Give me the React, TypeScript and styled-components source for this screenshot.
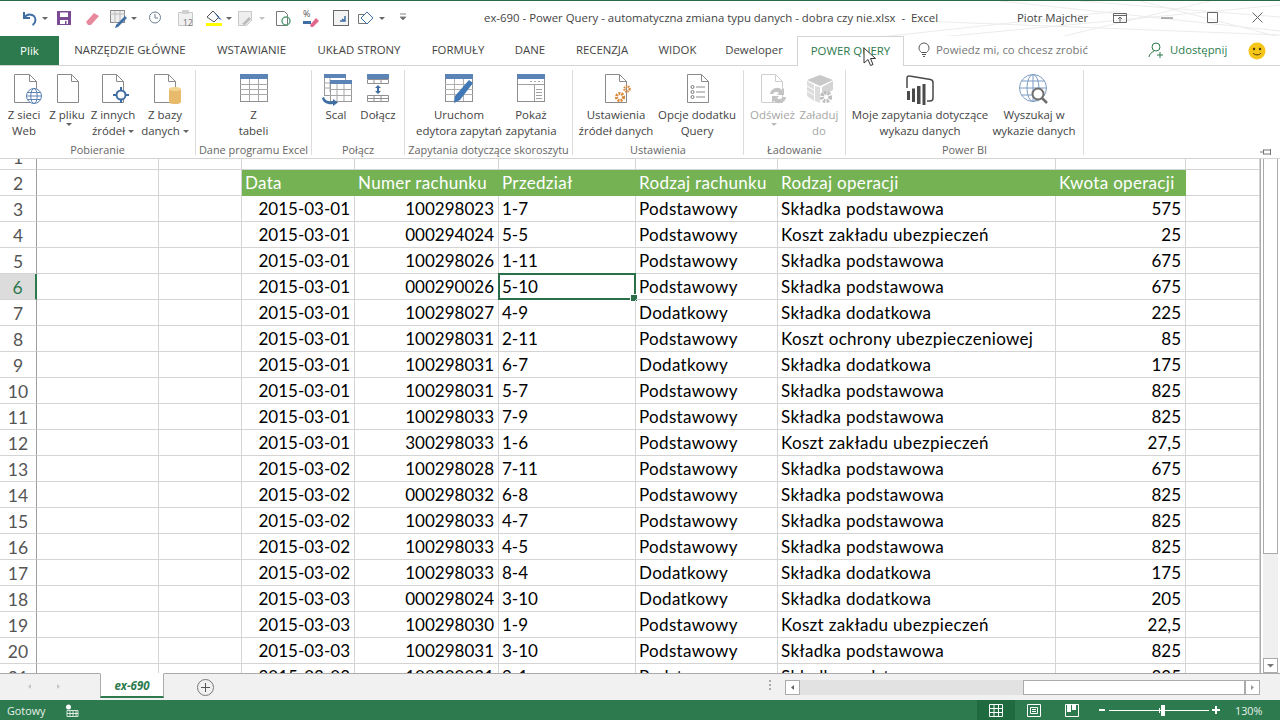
import React, { FC } from "react";
import styled, { createGlobalStyle } from "styled-components";

const GlobalStyle = createGlobalStyle`
  html, body {
    margin: 0;
    padding: 0;
    background: #fff;
    overflow: hidden;
  }
  * { box-sizing: border-box; }
`;

const UI_FONT = `"Open Sans", "Noto Sans", sans-serif`;
const CELL_FONT = `Lato, "Liberation Sans", sans-serif`;
const GREEN = "#2c7a4d";

const Page = styled.div`
  position: relative;
  width: 1280px;
  height: 720px;
  display: flex;
  flex-direction: column;
  overflow: hidden;
  font-family: ${UI_FONT};
  color: #444;
`;

/* title bar */
const TitleBar = styled.div`
  position: relative;
  height: 36px;
  flex: none;
  display: flex;
  align-items: center;
  padding-bottom: 2px;
  border-top: 1px solid #2a6b47;
  background: #fff;
`;
const Straws = styled.svg`
  position: absolute;
  right: 0;
  top: 0;
`;
const Quick = styled.div`
  width: 484px;
  flex: none;
  height: 100%;
`;
const Title = styled.div`
  width: 533px;
  flex: none;
  font-size: 11.4px;
  color: #444;
  white-space: pre;
  position: relative;
`;
const UserName = styled.div`
  width: 93px;
  flex: none;
  font-size: 11.4px;
  position: relative;
`;
const WinButton = styled.div<{ $w: number }>`
  width: ${(p) => p.$w}px;
  flex: none;
  display: flex;
  justify-content: center;
  align-items: center;
  position: relative;
`;

/* tab row */
const TabRow = styled.div`
  height: 30px;
  flex: none;
  display: flex;
  align-items: stretch;
  background: #fff;
  border-bottom: 1px solid #d4d4d4;
  position: relative;
`;
const FileTab = styled.div`
  width: 59px;
  background: ${GREEN};
  color: #fff;
  font-size: 11.5px;
  display: flex;
  align-items: center;
  justify-content: center;
`;
const Tab = styled.div<{ $w: number; $active?: boolean }>`
  width: ${(p) => p.$w}px;
  flex: none;
  display: flex;
  align-items: center;
  justify-content: center;
  padding-bottom: 2px;
  font-size: 11.4px;
  white-space: nowrap;
  color: ${(p) => (p.$active ? "#2c7a4d" : "#444")};
  ${(p) =>
    p.$active
      ? `background:#fff;border:1px solid #d4d4d4;border-bottom:0;height:30px;margin-right:-1px;`
      : ""}
`;
const TellMe = styled.div`
  margin-left: 15px;
  width: 230px;
  display: flex;
  align-items: center;
  gap: 6px;
  padding-bottom: 2px;
  font-size: 11.4px;
  color: #777;
  white-space: nowrap;
`;
const Share = styled.div`
  width: 100px;
  display: flex;
  align-items: center;
  gap: 6px;
  padding-bottom: 2px;
  font-size: 11.3px;
  color: ${GREEN};
`;

/* ribbon */
const Ribbon = styled.div`
  height: 93px;
  flex: none;
  display: flex;
  padding: 4px 0 3px;
  background: #fff;
  border-bottom: 1px solid #d4d4d4;
`;
const Group = styled.div<{ $w: number }>`
  width: ${(p) => p.$w}px;
  flex: none;
  display: flex;
  flex-direction: column;
  border-right: 1px solid #dcdcdc;
`;
const GroupBody = styled.div<{ $pad?: number; $center?: boolean }>`
  flex: 1;
  display: flex;
  padding-top: 2px;
  padding-left: ${(p) => p.$pad ?? 0}px;
  justify-content: ${(p) => (p.$center ? "center" : "flex-start")};
`;
const GroupLabel = styled.div`
  height: 16px;
  padding-top: 4px;
  line-height: 14px;
  text-align: center;
  font-size: 10.9px;
  color: #666;
  white-space: nowrap;
`;
const RibbonBtn = styled.div<{ $w: number; $off?: boolean }>`
  width: ${(p) => p.$w}px;
  flex: none;
  display: flex;
  flex-direction: column;
  align-items: center;
  text-align: center;
  color: ${(p) => (p.$off ? "#a6a6a6" : "#444")};
  font-size: 11.45px;
  line-height: 16px;
  white-space: nowrap;
  svg { flex: none; margin-bottom: 1px; }
`;
const Caret = styled.span<{ $off?: boolean }>`
  display: inline-block;
  width: 0;
  height: 0;
  margin-left: 3px;
  vertical-align: 2px;
  border-left: 3px solid transparent;
  border-right: 3px solid transparent;
  border-top: 3px solid ${(p) => (p.$off ? "#bbb" : "#666")};
`;
const Pin = styled.svg`
  margin-left: auto;
  margin-right: 8px;
  align-self: flex-end;
  margin-bottom: -1px;
`;

/* sheet */
const SheetArea = styled.div`
  height: 514px;
  flex: none;
  display: flex;
  background: #fff;
`;
const Grid = styled.div`
  width: 1261px;
  flex: none;
  overflow: hidden;
  border-right: 1px solid #ababab;
`;
const Row = styled.div<{ $h: number }>`
  display: flex;
  height: ${(p) => p.$h}px;
`;
const RowHead = styled.div<{ $sel?: boolean }>`
  width: 37px;
  flex: none;
  border-bottom: 1px solid #d4d4d4;
  border-right: ${(p) => (p.$sel ? `2px solid ${GREEN}` : "1px solid #9f9f9f")};
  background: ${(p) => (p.$sel ? "#dcdcdc" : "#fff")};
  color: ${(p) => (p.$sel ? GREEN : "#555")};
  font-family: ${CELL_FONT};
  font-size: 17.5px;
  display: flex;
  align-items: flex-end;
  justify-content: center;
  line-height: 23px;
  overflow: hidden;
`;
const Cell = styled.div<{ $w: number; $right?: boolean; $head?: boolean; $tight?: boolean }>`
  width: ${(p) => p.$w}px;
  flex: none;
  position: relative;
  line-height: 26px;
  padding: ${(p) => (p.$right ? "0 4px 0 0" : "0 0 0 3px")};
  text-align: ${(p) => (p.$right ? "right" : "left")};
  font-family: ${CELL_FONT};
  font-size: 17px;
  letter-spacing: ${(p) => (p.$tight ? "0" : "0.32px")};
  white-space: nowrap;
  color: ${(p) => (p.$head ? "#fff" : "#000")};
  background: ${(p) => (p.$head ? "#75b254" : "transparent")};
  border-right: 1px solid ${(p) => (p.$head ? "#75b254" : "#d4d4d4")};
  border-bottom: 1px solid ${(p) => (p.$head ? "#75b254" : "#d4d4d4")};
`;
const ActiveFrame = styled.div`
  position: absolute;
  left: -1px;
  top: -1px;
  right: -1px;
  bottom: -1px;
  border: 2px solid #2a6f48;
  pointer-events: none;
  &::after {
    content: "";
    position: absolute;
    right: -4px;
    bottom: -4px;
    width: 6px;
    height: 6px;
    background: #2a6f48;
    border: 1px solid #fff;
  }
`;
const VScroll = styled.div`
  width: 19px;
  flex: none;
  display: flex;
  flex-direction: column;
  padding: 0 2px;
  background: #fff;
`;
const VTrack = styled.div`
  flex: 1;
  background: #f0f0f0;
`;
const VThumb = styled.div`
  height: 395px;
  background: #fff;
  border: 1px solid #ababab;
  border-top: 0;
`;
const VButton = styled.div`
  height: 15px;
  background: #fff;
  border: 1px solid #ababab;
  display: flex;
  align-items: center;
  justify-content: center;
`;

/* sheet tabs + horizontal scrollbar */
const TabBar = styled.div`
  height: 27px;
  flex: none;
  display: flex;
  align-items: flex-start;
  background: #f1f1f1;
  border-top: 1px solid #ababab;
`;
const NavArrows = styled.div`
  width: 100px;
  height: 24px;
  flex: none;
  display: flex;
  align-items: center;
  padding-left: 26px;
  gap: 22px;
`;
const SheetTab = styled.div`
  width: 64px;
  height: 25px;
  margin-top: -1px;
  flex: none;
  background: #fff;
  border: 1px solid #ababab;
  border-top-color: #fff;
  border-bottom: 2px solid ${GREEN};
  color: ${GREEN};
  font-size: 11.5px;
  font-weight: 700;
  font-style: italic;
  text-align: center;
  line-height: 24px;
`;
const AddSheet = styled.div`
  width: 17px;
  height: 17px;
  margin: 5px 0 0 33px;
  flex: none;
  border: 1px solid #777;
  border-radius: 50%;
  position: relative;
  &::before, &::after {
    content: "";
    position: absolute;
    background: #555;
  }
  &::before { left: 3px; right: 3px; top: 7px; height: 1px; }
  &::after { top: 3px; bottom: 3px; left: 7px; width: 1px; }
`;
const Dots = styled.div`
  margin: 6px 0 0 555px;
  width: 2px;
  height: 11px;
  flex: none;
  background: repeating-linear-gradient(#aaa 0 2px, transparent 2px 4px);
`;
const HScroll = styled.div`
  margin: 6px 0 0 14px;
  width: 475px;
  height: 15px;
  flex: none;
  display: flex;
`;
const HTrack = styled.div`
  flex: 1;
  display: flex;
  background: #e2e2e2;
`;
const HThumb = styled.div`
  margin-left: auto;
  width: 222px;
  background: #fff;
  border: 1px solid #ababab;
`;
const HButton = styled.div`
  width: 15px;
  background: #fff;
  border: 1px solid #ababab;
  display: flex;
  align-items: center;
  justify-content: center;
`;

/* status bar */
const StatusBar = styled.div`
  height: 20px;
  flex: none;
  display: flex;
  align-items: center;
  background: ${GREEN};
  color: #e8f1ec;
  font-size: 10.8px;
  padding-left: 7px;
`;
const StatusText = styled.div`
  width: 58px;
  flex: none;
`;
const StatusGap = styled.div`
  width: 898px;
  flex: none;
`;
const ViewBtn = styled.div<{ $active?: boolean }>`
  width: 38px;
  height: 20px;
  flex: none;
  display: flex;
  align-items: center;
  justify-content: center;
  background: ${(p) => (p.$active ? "#1f6a3f" : "transparent")};
`;
const Zoom = styled.div`
  display: flex;
  align-items: center;
  flex: none;
  margin-left: 8px;
  height: 20px;
`;
const ZoomTrack = styled.div`
  position: relative;
  width: 100px;
  height: 1px;
  margin: 0 3px 0 4px;
  background: #fff;
`;
const ZoomThumb = styled.div`
  position: absolute;
  left: 52px;
  top: -5px;
  width: 4px;
  height: 11px;
  background: #fff;
`;
const ZoomMark = styled.div`
  position: absolute;
  left: 50px;
  top: -2px;
  width: 1px;
  height: 5px;
  background: #fff;
`;
const ZoomValue = styled.div`
  margin-left: 15px;
  width: 30px;
`;
const Pointer = styled.svg`
  position: absolute;
  left: 863px;
  top: 47px;
`;

/* icons */
const Doc: FC<{ x?: number; w?: number; c?: string }> = ({ x = 7, w = 21, c = "#8a8a8a" }) => (
  <path
    d={`M${x + 0.5} 2.5h${w - 7}l7 7v21h-${w}zM${x + w - 6.5} 2.5v7h7`}
    fill="#fff"
    stroke={c}
  />
);

const Ic: FC<{ children?: React.ReactNode; w?: number }> = ({ children, w = 36 }) => (
  <svg width={w} height={34} viewBox={`0 0 ${w} 34`}>
    {children}
  </svg>
);

const TableIcon = () => (
  <Ic>
    <rect x="4.5" y="3.5" width="27" height="26" fill="#fff" stroke="#8f8f8f" />
    <rect x="4" y="2" width="28" height="5" fill="#5b83b5" />
    <path d="M4 12.5h28M4 17.5h28M4 22.5h28M13.5 7v22M22.5 7v22" stroke="#a8a8a8" />
  </Ic>
);

const MergeIcon = () => (
  <Ic>
    <rect x="6.5" y="3.5" width="21" height="20" fill="#fff" stroke="#9a9a9a" />
    <rect x="6" y="2" width="22" height="4" fill="#5b83b5" />
    <path d="M6 11h8M6 16h8M12 6v14" stroke="#a8a8a8" />
    <rect x="12.5" y="9.5" width="21" height="20" fill="#fff" stroke="#9a9a9a" />
    <rect x="12" y="8" width="22" height="4" fill="#5b83b5" />
    <path d="M12 17.5h22M12 23.5h22M19 12v17M26 12v17" stroke="#a8a8a8" />
    <path d="M6 25c1 4 5 5 9 4v-2l5 3.5-5 3.5v-2c-5 1-10-1-11-6z" fill="#3f6ea3" />
  </Ic>
);

const AppendIcon = () => (
  <Ic>
    <rect x="7" y="2" width="22" height="5" fill="#5b83b5" />
    <path d="M7.5 7.5h21v4h-21zM14 7v5M21 7v5" fill="#fff" stroke="#8f8f8f" />
    <path d="M7.5 23.5h21v6h-21zM7 26.5h22M14 23v7M21 23v7" fill="#fff" stroke="#8f8f8f" />
    <path d="M18 13l3 3h-2v3h2l-3 3-3-3h2v-3h-2z" fill="#3f6ea3" />
  </Ic>
);

const EditorIcon = () => (
  <Ic>
    <rect x="4.5" y="3.5" width="27" height="26" fill="#fff" stroke="#8f8f8f" />
    <rect x="4" y="2" width="28" height="5" fill="#5b83b5" />
    <path d="M4 12.5h28M4 17.5h28M4 22.5h28M13.5 7v22M22.500 7v22" stroke="#b0b0b0" />
    <path d="M28 8l4 3-13 17-6 3 1-7z" fill="#3f78b5" />
  </Ic>
);

const ShowIcon = () => (
  <Ic>
    <rect x="4.5" y="3.5" width="27" height="26" fill="#fff" stroke="#8f8f8f" />
    <rect x="4" y="2" width="28" height="5" fill="#5b83b5" />
    <path d="M5 12.5h26M21.500 13v16M23 17.500h6M23 20.500h6M23 23.500h6M23 26.500h6" stroke="#a0a0a0" />
    <path d="M17 9.500h13" stroke="#aaa" strokeDasharray="2 2" />
  </Ic>
);

const Gear: FC<{ cx: number; cy: number; r: number; c?: string }> = ({ cx, cy, r, c = "#d98a3d" }) => (
  <circle cx={cx} cy={cy} r={r} fill="none" stroke={c} strokeWidth={r * 0.9} strokeDasharray={`${r * 0.55} ${r * 0.28}`} />
);

const WIcon = () => (
  <Ic>
    <Doc x={7} w={21} />
    <Gear cx={22} cy={25} r={3.5} />
    <Gear cx={29} cy={17} r={2.6} />
  </Ic>
);

const OptionsIcon = () => (
  <Ic>
    <Doc x={8} w={21} />
    <path d="M17 15h9M17 20h9M17 25h9" stroke="#8a8a8a" />
    <circle cx="13.500" cy="15" r="1.500" fill="none" stroke="#777" />
    <circle cx="13.500" cy="20" r="1.500" fill="none" stroke="#777" />
    <circle cx="13.500" cy="25" r="1.500" fill="none" stroke="#777" />
  </Ic>
);

const RefreshIcon = () => (
  <Ic>
    <Doc x={6} w={21} c="#cfcfcf" />
    <path d="M15 22a7 7 0 0 1 12-4l2-2v7h-7l2-2a4 4 0 0 0-6 1zM31 25a7 7 0 0 1-12 4l-2 2v-7h7l-2 2a4 4 0 0 0 6-1z" fill="#c4c4c4" />
  </Ic>
);

const LoadIcon = () => (
  <Ic>
    <path d="M6 8l13-5 13 5-13 6z" fill="#c9c9c9" />
    <path d="M6 9v15l7 5V13zM14 14v15l5 2V15z" fill="#dcdcdc" />
    <path d="M6 14l7 4M6 19l7 4" stroke="#fff" />
    <path d="M21 15l11-6v9l-11 6z" fill="#d4d4d4" />
    <Gear cx={25} cy={25} r={4.2} c="#bdbdbd" />
  </Ic>
);

const PowerBiIcon = () => (
  <Ic>
    <path d="M5 16V6c0-1.500 1-2.300 2.500-2l21 3.500c1.500.3 2.500 1.300 2.500 3V26c0 2-1 3-3 3h-3" fill="none" stroke="#4a4a4a" strokeWidth="1.500" />
    <path d="M5 19h3v9H5zM10 16.500h3V30h-3zM15 14h3.500v18H15zM20.500 12h3v21h-3z" fill="#4a4a4a" />
  </Ic>
);

const GlobeSearchIcon = () => (
  <Ic>
    <g fill="none" stroke="#7b9cc4">
      <circle cx="17" cy="16" r="13.500" />
      <ellipse cx="17" cy="16" rx="6" ry="13.500" />
      <path d="M17 2.500v27M3.500 16h27M5.500 9h23M5.500 23h23" />
    </g>
    <circle cx="22" cy="22" r="5.500" fill="#fff" stroke="#6e6e6e" strokeWidth="2" />
    <path d="M26 26l5 5" stroke="#6e6e6e" strokeWidth="2.500" />
  </Ic>
);

const WebIcon = () => (
  <Ic>
    <Doc x={8} w={22} />
    <g fill="#fff" stroke="#5b83b5">
      <circle cx="28" cy="24" r="7.500" />
      <ellipse cx="28" cy="24" rx="3.200" ry="7.500" fill="none" />
      <path d="M20.500 24h15M21.500 20.500h13M21.500 27.500h13" fill="none" />
    </g>
  </Ic>
);

const OtherIcon = () => (
  <Ic>
    <Doc x={7} w={21} />
    <path d="M26 15v16M18 23h16" stroke="#3f6ea3" strokeWidth="2" />
    <circle cx="26" cy="23" r="4.500" fill="#fff" stroke="#3f6ea3" strokeWidth="2" />
  </Ic>
);

const DbIcon = () => (
  <Ic>
    <Doc x={7} w={21} />
    <rect x="22" y="17" width="12" height="13" rx="1" fill="#e8bb6c" />
    <ellipse cx="28" cy="17" rx="6" ry="2" fill="#f3d491" />
    <ellipse cx="28" cy="30" rx="6" ry="2" fill="#e8bb6c" />
  </Ic>
);

const QuickIcons = () => (
  <svg width="420" height="33" viewBox="0 1 420 33">
    <g fill="none">
      <path d="M24 12v6h6M24 18c2-3 5-4 8-3 3 1 4 4 3 7-.5 1.500-1.500 2.500-2.500 3" stroke="#3f6ea3" strokeWidth="2" />
      <path d="M42 17h6l-3 3z" fill="#666" />
      <rect x="57" y="11" width="14" height="14" fill="#7a4a95" />
      <rect x="60" y="12.500" width="8" height="4.500" fill="#fff" />
      <rect x="60" y="20" width="8" height="4" fill="#fff" />
      <rect x="65" y="21" width="1.500" height="3" fill="#7a4a95" />
      <path d="M86 22l8-9 5 3-8 9-3 0z" fill="#e88a9e" />
      <rect x="110.500" y="10.500" width="14" height="12" stroke="#8a8a8a" fill="#eee" />
      <path d="M110 14h15M115 11v12M120 11v12" stroke="#bbb" />
      <path d="M116 25l9-9 2 2-9 9-3 1z" fill="#3f6ea3" />
      <path d="M131 17h6l-3 3z" fill="#666" />
      <circle cx="155" cy="17.500" r="5.500" stroke="#6d7f93" />
      <path d="M155 14v4h3" stroke="#6d7f93" />
      <path d="M178.500 12.500h14v13h-14z" stroke="#c8c8c8" fill="#f1f1f1" />
      <rect x="182" y="10" width="7" height="4" fill="#d0d0d0" />
      <text x="193" y="26" textAnchor="end" fontSize="9" fontFamily={UI_FONT} fill="#777">12</text>
      <path d="M207 17l6-6 6 6-5 5z" stroke="#555" fill="#fff" />
      <path d="M213 11l6 6 3 3-3-1" fill="#3f6ea3" />
      <rect x="206" y="23" width="16" height="3" fill="#ffff00" />
      <path d="M226 17h6l-3 3z" fill="#666" />
      <path d="M238.500 11.500h13v9l-5 5h-8z" stroke="#c8c8c8" fill="#eee" />
      <path d="M242 24l7-7 2 2-6 6z" fill="#bbb" />
      <path d="M259 17h6l-3 3z" fill="#c0c0c0" />
      <path d="M276.500 11.500h8l3 3v11h-11z" stroke="#777" fill="#fff" />
      <circle cx="286" cy="21" r="4" stroke="#59a07a" strokeWidth="1.500" />
      <text x="303" y="17" fontSize="9" fontFamily={UI_FONT} fill="#555">%</text>
      <path d="M303 21h8v3h-8z" fill="#3f6ea3" />
      <path d="M310 25l6-7 3 3-6 6h-2z" fill="#e0688a" />
      <rect x="333.500" y="10.500" width="15" height="15" stroke="#666" fill="#f3f3f3" />
      <path d="M340 21h5v-5M345 21l-3-2" stroke="#3f6ea3" strokeWidth="1.500" />
      <path d="M358.500 14.500h8v9h-8z" stroke="#777" />
      <path d="M367 12l6 6-6 6-6-6z" stroke="#3f6ea3" fill="#fff" />
      <path d="M379 17h6l-3 3z" fill="#666" />
      <path d="M400 14h6M400 17h6l-3 3z" stroke="#888" fill="#666" />
    </g>
  </svg>
);

const BulbIcon = () => (
  <svg width="12" height="15" viewBox="0 0 12 15" fill="none" stroke="#555">
    <path d="M3.500 10.500C2 9 1 8 1 6a5 5 0 0 1 10 0c0 2-1 3-2.500 4.500zM4 12.500h4M5 14.500h2" />
  </svg>
);

const ShareIcon = () => (
  <svg width="16" height="16" viewBox="0 0 16 16" fill="none" stroke="#2c7a4d">
    <circle cx="8" cy="5" r="4" />
    <path d="M1 15c.5-3 2.500-5 5-5.500M9 13h6M12 10v6" />
  </svg>
);

const Smiley = () => (
  <svg width="18" height="18" viewBox="0 0 18 18">
    <circle cx="9" cy="9" r="8.500" fill="#f5c518" />
    <circle cx="6" cy="7" r="1.200" fill="#4a3a10" />
    <circle cx="12" cy="7" r="1.200" fill="#4a3a10" />
    <path d="M5 11c1.500 2.500 6.500 2.500 8 0" fill="none" stroke="#4a3a10" />
  </svg>
);

const Triangle: FC<{ dir: "l" | "r" | "d"; c?: string }> = ({ dir, c = "#777" }) => (
  <svg width="7" height="7" viewBox="0 0 7 7" fill={c}>
    {dir === "l" && <path d="M5 1v5L2 3.500z" />}
    {dir === "r" && <path d="M2 1v5l3-2.500z" />}
    {dir === "d" && <path d="M0 2h7L3.500 5.500z" />}
  </svg>
);

/* data */
const COLS = [122, 83, 113, 144, 137, 142, 278, 130, 74];

type Rec = [string, string, string, string, string, string];

const HEAD: Rec = ["Data", "Numer rachunku", "Przedział", "Rodzaj rachunku", "Rodzaj operacji", "Kwota operacji"];

const SP = "Składka podstawowa";
const SD = "Składka dodatkowa";
const KZ = "Koszt zakładu ubezpieczeń";
const PO = "Podstawowy";
const DO = "Dodatkowy";

const DATA: Rec[] = [
  ["2015-03-01", "100298023", "1-7", PO, SP, "575"],
  ["2015-03-01", "000294024", "5-5", PO, KZ, "25"],
  ["2015-03-01", "100298026", "1-11", PO, SP, "675"],
  ["2015-03-01", "000290026", "5-10", PO, SP, "675"],
  ["2015-03-01", "100298027", "4-9", DO, SD, "225"],
  ["2015-03-01", "100298031", "2-11", PO, "Koszt ochrony ubezpieczeniowej", "85"],
  ["2015-03-01", "100298031", "6-7", DO, SD, "175"],
  ["2015-03-01", "100298031", "5-7", PO, SP, "825"],
  ["2015-03-01", "100298033", "7-9", PO, SP, "825"],
  ["2015-03-01", "300298033", "1-6", PO, KZ, "27,5"],
  ["2015-03-02", "100298028", "7-11", PO, SP, "675"],
  ["2015-03-02", "000298032", "6-8", PO, SP, "825"],
  ["2015-03-02", "100298033", "4-7", PO, SP, "825"],
  ["2015-03-02", "100298033", "4-5", PO, SP, "825"],
  ["2015-03-02", "100298033", "8-4", DO, SD, "175"],
  ["2015-03-03", "000298024", "3-10", DO, SD, "205"],
  ["2015-03-03", "100298030", "1-9", PO, KZ, "22,5"],
  ["2015-03-03", "100298031", "3-10", PO, SP, "825"],
  ["2015-03-03", "100300031", "9-1", PO, SP, "825"],
];

const TABS: [string, number][] = [
  ["NARZĘDZIE GŁÓWNE", 142],
  ["WSTAWIANIE", 101],
  ["UKŁAD STRONY", 114],
  ["FORMUŁY", 84],
  ["DANE", 60],
  ["RECENZJA", 84],
  ["WIDOK", 67],
  ["Deweloper", 86],
];

const ACTIVE_ROW = 6;

const App: FC = () => {
  return (
    <Page>
      <GlobalStyle />
      <TitleBar>
        <Straws width="400" height="36" viewBox="0 0 400 36" fill="none" stroke="#ececec">
          <path d="M0 36L240 10M60 36L400 4M120 0L400 30M200 0L400 16M40 20L400 34M260 0L400 36M330 0L180 36" />
        </Straws>
        <Quick>
          <QuickIcons />
        </Quick>
        <Title>ex-690 - Power Query - automatyczna zmiana typu danych - dobra czy nie.xlsx  -  Excel</Title>
        <UserName>Piotr Majcher</UserName>
        <WinButton $w={20}>
          <svg width="14" height="10" viewBox="0 0 14 10" fill="none" stroke="#666">
            <path d="M.5.500h13v9H.5zM.5 2.500h13M7 9V4M5 6l2-2 2 2" />
          </svg>
        </WinButton>
        <WinButton $w={74}>
          <svg width="12" height="2" viewBox="0 0 12 2">
            <path d="M0 1h12" stroke="#666" />
          </svg>
        </WinButton>
        <WinButton $w={16}>
          <svg width="11" height="11" viewBox="0 0 11 11" fill="none" stroke="#666">
            <path d="M.5.500h10v10H.5z" />
          </svg>
        </WinButton>
        <WinButton $w={74}>
          <svg width="11" height="11" viewBox="0 0 11 11" fill="none" stroke="#666">
            <path d="M.5.500l10 10M10.500.500l-10 10" />
          </svg>
        </WinButton>
      </TitleBar>

      <TabRow>
        <FileTab>Plik</FileTab>
        {TABS.map(([label, w]) => (
          <Tab key={label} $w={w}>
            {label}
          </Tab>
        ))}
        <Tab $w={107} $active>
          POWER QUERY
        </Tab>
        <TellMe>
          <BulbIcon />
          Powiedz mi, co chcesz zrobić
        </TellMe>
        <Share>
          <ShareIcon />
          Udostępnij
        </Share>
        <WinButton $w={18}>
          <Smiley />
        </WinButton>
      </TabRow>

      <Ribbon>
        <Group $w={196}>
          <GroupBody>
            <RibbonBtn $w={48}>
              <WebIcon />
              Z sieci
              <br />
              Web
            </RibbonBtn>
            <RibbonBtn $w={38}>
              <Ic>
                <Doc x={8} w={21} />
              </Ic>
              Z pliku
              <br />
              <Caret />
            </RibbonBtn>
            <RibbonBtn $w={54}>
              <OtherIcon />
              Z innych
              <br />
              <span>
                źródeł
                <Caret />
              </span>
            </RibbonBtn>
            <RibbonBtn $w={50}>
              <DbIcon />Z bazy
              <br />
              <span>
                danych
                <Caret />
              </span>
            </RibbonBtn>
          </GroupBody>
          <GroupLabel>Pobieranie</GroupLabel>
        </Group>

        <Group $w={116}>
          <GroupBody $center>
            <RibbonBtn $w={60}>
              <TableIcon />Z
              <br />
              tabeli
            </RibbonBtn>
          </GroupBody>
          <GroupLabel>Dane programu Excel</GroupLabel>
        </Group>

        <Group $w={93}>
          <GroupBody $pad={3}>
            <RibbonBtn $w={42}>
              <MergeIcon />
              Scal
            </RibbonBtn>
            <RibbonBtn $w={42}>
              <AppendIcon />
              Dołącz
            </RibbonBtn>
          </GroupBody>
          <GroupLabel>Połącz</GroupLabel>
        </Group>

        <Group $w={168}>
          <GroupBody $pad={12}>
            <RibbonBtn $w={84}>
              <EditorIcon />
              Uruchom
              <br />
              edytora zapytań
            </RibbonBtn>
            <RibbonBtn $w={60}>
              <ShowIcon />
              Pokaż
              <br />
              zapytania
            </RibbonBtn>
          </GroupBody>
          <GroupLabel>Zapytania dotyczące skoroszytu</GroupLabel>
        </Group>

        <Group $w={171}>
          <GroupBody $pad={3}>
            <RibbonBtn $w={80}>
              <WIcon />
              Ustawienia
              <br />
              źródeł danych
            </RibbonBtn>
            <RibbonBtn $w={82}>
              <OptionsIcon />
              Opcje dodatku
              <br />
              Query
            </RibbonBtn>
          </GroupBody>
          <GroupLabel>Ustawienia</GroupLabel>
        </Group>

        <Group $w={102}>
          <GroupBody $pad={6}>
            <RibbonBtn $w={45} $off>
              <RefreshIcon />
              Odśwież
              <br />
              <Caret $off />
            </RibbonBtn>
            <RibbonBtn $w={48} $off>
              <LoadIcon />
              Załaduj
              <br />
              do
            </RibbonBtn>
          </GroupBody>
          <GroupLabel>Ładowanie</GroupLabel>
        </Group>

        <Group $w={238}>
          <GroupBody $pad={4}>
            <RibbonBtn $w={140}>
              <PowerBiIcon />
              Moje zapytania dotyczące
              <br />
              wykazu danych
            </RibbonBtn>
            <RibbonBtn $w={88}>
              <GlobeSearchIcon />
              Wyszukaj w
              <br />
              wykazie danych
            </RibbonBtn>
          </GroupBody>
          <GroupLabel>Power BI</GroupLabel>
        </Group>

        <Pin width="12" height="8" viewBox="0 0 12 8" fill="none" stroke="#777">
          <path d="M0 4h3M3.500 1.500v5M3.500 2h7v4h-7M10.500 1v6" />
        </Pin>
      </Ribbon>

      <SheetArea>
        <Grid>
          <Row $h={11}>
            <RowHead>1</RowHead>
            {COLS.map((w, i) => (
              <Cell key={i} $w={w} />
            ))}
          </Row>
          <Row $h={26}>
            <RowHead>2</RowHead>
            <Cell $w={COLS[0]} />
            <Cell $w={COLS[1]} />
            {HEAD.map((text, i) => (
              <Cell key={i} $w={COLS[i + 2]} $head>
                {text}
              </Cell>
            ))}
            <Cell $w={COLS[8]} />
          </Row>
          {DATA.map((rec, r) => {
            const rowNum = r + 3;
            return (
              <Row key={rowNum} $h={26}>
                <RowHead $sel={rowNum === ACTIVE_ROW}>{rowNum}</RowHead>
                <Cell $w={COLS[0]} />
                <Cell $w={COLS[1]} />
                {rec.map((text, i) => (
                  <Cell key={i} $w={COLS[i + 2]} $right={i < 2 || i === 5} $tight={i < 3 || i === 5}>
                    {text}
                    {rowNum === ACTIVE_ROW && i === 2 && <ActiveFrame />}
                  </Cell>
                ))}
                <Cell $w={COLS[8]} />
              </Row>
            );
          })}
        </Grid>
        <VScroll>
          <VThumb />
          <VTrack />
          <VButton>
            <Triangle dir="d" />
          </VButton>
        </VScroll>
      </SheetArea>

      <TabBar>
        <NavArrows>
          <Triangle dir="l" c="#c4c4c4" />
          <Triangle dir="r" c="#c4c4c4" />
        </NavArrows>
        <SheetTab>ex-690</SheetTab>
        <AddSheet />
        <Dots />
        <HScroll>
          <HButton>
            <Triangle dir="l" c="#666" />
          </HButton>
          <HTrack>
            <HThumb />
          </HTrack>
          <HButton>
            <Triangle dir="r" c="#999" />
          </HButton>
        </HScroll>
      </TabBar>

      <StatusBar>
        <StatusText>Gotowy</StatusText>
        <svg width="14" height="13" viewBox="0 0 14 13" fill="none" stroke="#fff">
          <path d="M2 6.500h11v6H2zM5 7v5M8 7v5M11 7v5M2 9.500h11" strokeWidth="0.8" />
          <circle cx="3.500" cy="3" r="2.500" fill="#fff" stroke="none" />
        </svg>
        <StatusGap />
        <ViewBtn $active>
          <svg width="14" height="13" viewBox="0 0 14 13" fill="none" stroke="#fff">
            <path d="M.5.500h13v12H.5zM.5 4.500h13M.5 8.500h13M5 .500v12M9.500.500v12" />
          </svg>
        </ViewBtn>
        <ViewBtn>
          <svg width="14" height="13" viewBox="0 0 14 13" fill="none" stroke="#fff">
            <path d="M.5.500h13v12H.5zM3.500 3.500h7v6h-7zM5 5.500h4M5 7.500h4" />
          </svg>
        </ViewBtn>
        <ViewBtn>
          <svg width="14" height="13" viewBox="0 0 14 13" fill="none" stroke="#fff">
            <path d="M.5.500h13v12H.5z" />
            <path d="M2 1h4v7H2zM7 1h4v5H7z" fill="#fff" stroke="none" />
          </svg>
        </ViewBtn>
        <Zoom>
          <svg width="6" height="2" viewBox="0 0 6 2">
            <path d="M0 1h6" stroke="#fff" strokeWidth="2" />
          </svg>
          <ZoomTrack>
            <ZoomMark />
            <ZoomThumb />
          </ZoomTrack>
          <svg width="8" height="8" viewBox="0 0 8 8">
            <path d="M0 4h8M4 0v8" stroke="#fff" strokeWidth="2" />
          </svg>
        </Zoom>
        <ZoomValue>130%</ZoomValue>
      </StatusBar>

      <Pointer width="14" height="21" viewBox="0 0 14 21">
        <path d="M1 1v15l4-3.500 2.500 6 2.500-1-2.500-6h5z" fill="#fff" stroke="#333" />
      </Pointer>
    </Page>
  );
};

export default App;
